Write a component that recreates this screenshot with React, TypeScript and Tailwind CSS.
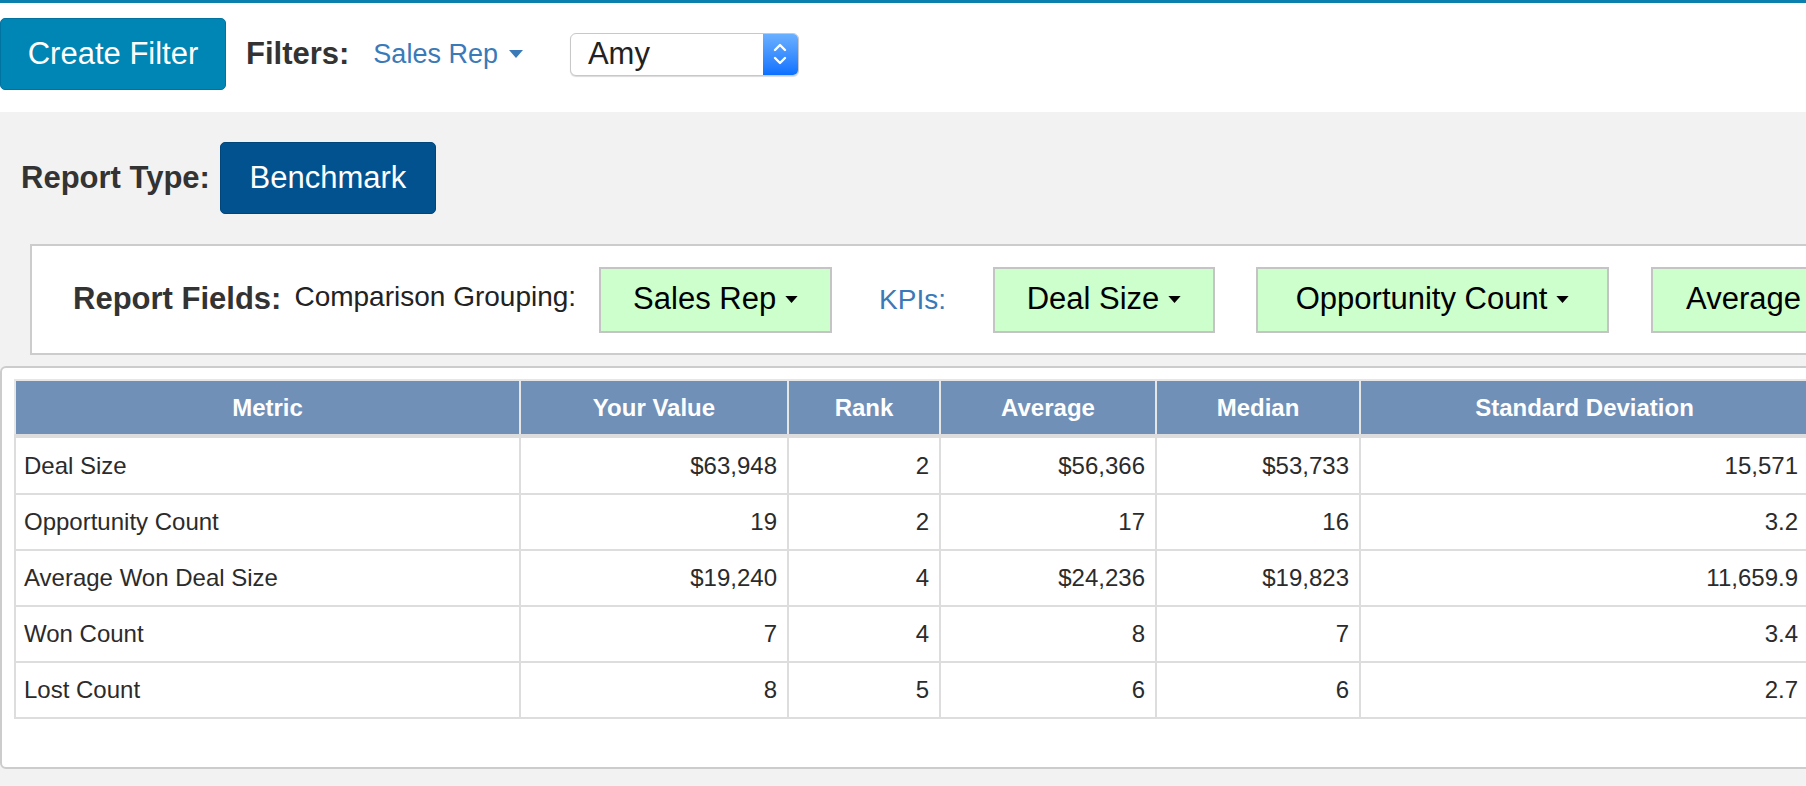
import React from 'react'

const font = { fontFamily: '"Liberation Sans", Arial, Helvetica, sans-serif' }

function Caret({ color = '#000', w = 14, h = 8 }: { color?: string; w?: number; h?: number }) {
  return (
    <svg width={w} height={h} viewBox="0 0 14 8" className="shrink-0">
      <polygon points="0,0 14,0 7,8" fill={color} />
    </svg>
  )
}

function Dropdown({ label, width }: { label: string; width: string }) {
  return (
    <div
      className={`${width} h-[66px] shrink-0 flex items-center justify-center gap-[9px] bg-[#ccffcc] border-2 border-[#c4c4c4] text-[31px] text-black`}
    >
      <span>{label}</span>
      <Caret w={13} h={7} />
    </div>
  )
}

const columns = [
  { name: 'Metric', width: 'w-[505px]' },
  { name: 'Your Value', width: 'w-[268px]' },
  { name: 'Rank', width: 'w-[152px]' },
  { name: 'Average', width: 'w-[216px]' },
  { name: 'Median', width: 'w-[204px]' },
  { name: 'Standard Deviation', width: 'w-[449px]' },
]

const rows = [
  ['Deal Size', '$63,948', '2', '$56,366', '$53,733', '15,571'],
  ['Opportunity Count', '19', '2', '17', '16', '3.2'],
  ['Average Won Deal Size', '$19,240', '4', '$24,236', '$19,823', '11,659.9'],
  ['Won Count', '7', '4', '8', '7', '3.4'],
  ['Lost Count', '8', '5', '6', '6', '2.7'],
]

export default function App() {
  return (
    <div className="w-[1806px] h-[786px] overflow-hidden bg-[#f2f2f2] text-[#333]" style={font}>
      {/* filter bar */}
      <div className="bg-white h-[112px] border-t-[3px] border-[#0b7fae] pt-[15px]">
        <div className="flex items-center h-[72px]">
          <button className="w-[226px] h-[72px] bg-[#0086b4] border border-[#0073a0] rounded-[5px] text-white text-[31px]">
            Create Filter
          </button>
          <span className="ml-[20px] font-bold text-[31px] text-[#333]">Filters:</span>
          <span className="ml-[24px] flex items-center gap-[10px] text-[27px] text-[#3a7ab8]">
            Sales Rep
            <Caret color="#3a7ab8" w={16} h={8} />
          </span>
          <div className="ml-[46px] w-[229px] h-[43px] flex rounded-[6px] border border-[#c8c8c8] bg-white shadow-[0_1px_1px_rgba(0,0,0,0.15)] overflow-hidden">
            <div className="flex-1 flex items-center pl-[17px] text-[31px] text-[#222]">Amy</div>
            <div className="w-[35px] flex items-center justify-center bg-gradient-to-b from-[#69b0ff] to-[#0a70ff]">
              <svg width="16" height="28" viewBox="0 0 16 28" fill="none" stroke="white" strokeWidth="2.4" strokeLinecap="round" strokeLinejoin="round">
                <polyline points="3,10 8,5 13,10" />
                <polyline points="3,18 8,23 13,18" />
              </svg>
            </div>
          </div>
        </div>
      </div>

      {/* report type */}
      <div className="flex items-center pt-[30px] pl-[21px]">
        <span className="font-bold text-[31px] text-[#333]">Report Type:</span>
        <button className="ml-[10px] w-[216px] h-[72px] bg-[#02528f] border border-[#01467a] rounded-[5px] text-white text-[31px]">
          Benchmark
        </button>
      </div>

      {/* report fields */}
      <div className="mt-[30px] ml-[30px] w-[2100px] h-[111px] bg-white border-2 border-[#cccccc] flex items-center pl-[41px] whitespace-nowrap">
        <span className="font-bold text-[31px] text-[#333]">Report Fields:</span>
        <span className="ml-[13px] text-[28px] text-[#222] -mt-[6px]">Comparison Grouping:</span>
        <div className="ml-[23px]">
          <Dropdown label="Sales Rep" width="w-[233px]" />
        </div>
        <span className="ml-[47px] text-[28px] text-[#3a7ab8]">KPIs:</span>
        <div className="ml-[47px]">
          <Dropdown label="Deal Size" width="w-[222px]" />
        </div>
        <div className="ml-[41px]">
          <Dropdown label="Opportunity Count" width="w-[353px]" />
        </div>
        <div className="ml-[42px]">
          <Dropdown label="Average Won Deal Size" width="w-[420px]" />
        </div>
      </div>

      {/* benchmark table */}
      <div className="mt-[11px] w-[2000px] h-[403px] bg-white border-2 border-[#cccccc] rounded-[6px] pt-[11px] pl-[12px]">
        <table className="border-collapse text-[24px] text-[#2b2b2b] table-fixed w-[1795px]">
          <thead>
            <tr className="bg-[#7090b7]">
              {columns.map((c) => (
                <th
                  key={c.name}
                  className={`${c.width} h-[56px] font-bold text-white text-center border-2 border-[#e6e6e6] border-b-4 border-b-[#dddddd]`}
                >
                  {c.name}
                </th>
              ))}
            </tr>
          </thead>
          <tbody>
            {rows.map((r, ri) => (
              <tr key={r[0]}>
                {r.map((v, i) => (
                  <td
                    key={i}
                    className={`${ri === 0 ? 'h-[58px]' : 'h-[56px]'} border-2 border-[#dddddd] ${i === 0 ? 'text-left pl-[8px]' : 'text-right pr-[10px]'}`}
                  >
                    {v}
                  </td>
                ))}
              </tr>
            ))}
          </tbody>
        </table>
      </div>
    </div>
  )
}
